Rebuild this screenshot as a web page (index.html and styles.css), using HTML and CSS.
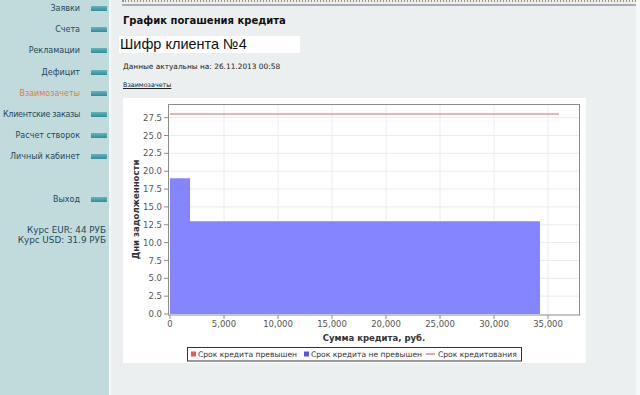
FILE: index.html
```html
<!DOCTYPE html>
<html lang="ru">
<head>
<meta charset="utf-8">
<title>График погашения кредита</title>
<link rel="stylesheet" href="styles.css">
</head>
<body>
<div class="page">
  <nav class="side">
    <ul class="menu">
      <li><span>Заявки</span><i class="bar"></i></li>
      <li><span>Счета</span><i class="bar"></i></li>
      <li><span>Рекламации</span><i class="bar"></i></li>
      <li><span>Дефицит</span><i class="bar"></i></li>
      <li class="active"><span>Взаимозачеты</span><i class="bar"></i></li>
      <li class="tight"><span>Клиентские заказы</span><i class="bar"></i></li>
      <li><span>Расчет створок</span><i class="bar"></i></li>
      <li><span>Личный кабинет</span><i class="bar"></i></li>
      <li class="blank"></li>
      <li><span>Выход</span><i class="bar"></i></li>
    </ul>
    <div class="rates">
      <div>Курс EUR: 44 РУБ</div>
      <div>Курс USD: 31.9 РУБ</div>
    </div>
  </nav>
  <main class="main">
    <div class="topline"></div>
    <h1 class="title">График погашения кредита</h1>
    <div class="client">Шифр клиента №4</div>
    <p class="updated">Данные актуальны на: 26.11.2013 00:58</p>
    <a class="link" href="#">Взаимозачеты</a>
    <div class="chart">
      <svg width="463" height="265" viewBox="0 0 463 265" xmlns="http://www.w3.org/2000/svg">
        <g class="grid">
          <line x1="46" y1="19.65" x2="456" y2="19.65"/>
          <line x1="46" y1="37.5" x2="456" y2="37.5"/>
          <line x1="46" y1="55.35" x2="456" y2="55.35"/>
          <line x1="46" y1="73.2" x2="456" y2="73.2"/>
          <line x1="46" y1="91.05" x2="456" y2="91.05"/>
          <line x1="46" y1="108.9" x2="456" y2="108.9"/>
          <line x1="46" y1="126.75" x2="456" y2="126.75"/>
          <line x1="46" y1="144.6" x2="456" y2="144.6"/>
          <line x1="46" y1="162.45" x2="456" y2="162.45"/>
          <line x1="46" y1="180.3" x2="456" y2="180.3"/>
          <line x1="46" y1="198.15" x2="456" y2="198.15"/>
          <line x1="101" y1="7" x2="101" y2="216"/>
          <line x1="155" y1="7" x2="155" y2="216"/>
          <line x1="209" y1="7" x2="209" y2="216"/>
          <line x1="263" y1="7" x2="263" y2="216"/>
          <line x1="317" y1="7" x2="317" y2="216"/>
          <line x1="371" y1="7" x2="371" y2="216"/>
          <line x1="425" y1="7" x2="425" y2="216"/>
        </g>
        <path class="area" d="M47,216 V80.3 H67 V123.2 H417 V216 Z"/>
        <line class="limit" x1="47" y1="16" x2="436" y2="16"/>
        <rect class="plot" x="45.5" y="6.5" width="411" height="210.5"/>
        <g class="ticks">
          <line x1="41" y1="19.65" x2="45" y2="19.65"/>
          <line x1="41" y1="37.5" x2="45" y2="37.5"/>
          <line x1="41" y1="55.35" x2="45" y2="55.35"/>
          <line x1="41" y1="73.2" x2="45" y2="73.2"/>
          <line x1="41" y1="91.05" x2="45" y2="91.05"/>
          <line x1="41" y1="108.9" x2="45" y2="108.9"/>
          <line x1="41" y1="126.75" x2="45" y2="126.75"/>
          <line x1="41" y1="144.6" x2="45" y2="144.6"/>
          <line x1="41" y1="162.45" x2="45" y2="162.45"/>
          <line x1="41" y1="180.3" x2="45" y2="180.3"/>
          <line x1="41" y1="198.15" x2="45" y2="198.15"/>
          <line x1="41" y1="216" x2="45" y2="216"/>
          <line x1="47" y1="217" x2="47" y2="221"/>
          <line x1="101" y1="217" x2="101" y2="221"/>
          <line x1="155" y1="217" x2="155" y2="221"/>
          <line x1="209" y1="217" x2="209" y2="221"/>
          <line x1="263" y1="217" x2="263" y2="221"/>
          <line x1="317" y1="217" x2="317" y2="221"/>
          <line x1="371" y1="217" x2="371" y2="221"/>
          <line x1="425" y1="217" x2="425" y2="221"/>
        </g>
        <g class="ylab">
          <text x="39" y="22.7">27.5</text>
          <text x="39" y="40.5">25.0</text>
          <text x="39" y="58.4">22.5</text>
          <text x="39" y="76.2">20.0</text>
          <text x="39" y="94.1">17.5</text>
          <text x="39" y="111.9">15.0</text>
          <text x="39" y="129.8">12.5</text>
          <text x="39" y="147.6">10.0</text>
          <text x="39" y="165.5">7.5</text>
          <text x="39" y="183.3">5.0</text>
          <text x="39" y="201.2">2.5</text>
          <text x="39" y="219">0.0</text>
        </g>
        <g class="xlab">
          <text x="47" y="229">0</text>
          <text x="101" y="229">5,000</text>
          <text x="155" y="229">10,000</text>
          <text x="209" y="229">15,000</text>
          <text x="263" y="229">20,000</text>
          <text x="317" y="229">25,000</text>
          <text x="371" y="229">30,000</text>
          <text x="425" y="229">35,000</text>
        </g>
        <text class="axtitle" x="251" y="242.5">Сумма кредита, руб.</text>
        <text class="axtitle" transform="translate(16 111.5) rotate(-90)">Дни задолженности</text>
        <rect class="legend" x="64.5" y="249.5" width="334" height="13.5"/>
        <rect class="sw-red" x="68" y="253.5" width="5" height="5"/>
        <text class="legtext" x="75" y="259">Срок кредита превышен</text>
        <rect class="sw-blue" x="181" y="253.5" width="5" height="5"/>
        <text class="legtext" x="188" y="259">Срок кредита не превышен</text>
        <line class="sw-line" x1="303" y1="256" x2="312" y2="256"/>
        <text class="legtext" x="315" y="259">Срок кредитования</text>
      </svg>
    </div>
  </main>
  <div class="edge"></div>
</div>
</body>
</html>
```

FILE: styles.css
```css
* { box-sizing: border-box; }
html, body { margin: 0; padding: 0; }
body {
  width: 640px;
  height: 395px;
  overflow: hidden;
  background: #ffffff;
  font-family: "DejaVu Sans", Verdana, sans-serif;
}
.page {
  display: flex;
  height: 395px;
}
.side {
  width: 111px;
  flex: none;
  background: #c1dbdc;
  border-right: 2px solid #f3f7f7;
  color: #24485a;
  font-size: 8px;
}
.menu {
  list-style: none;
  margin: -2px 0 0 0;
  padding: 0;
}
.menu li {
  height: 21.2px;
  display: flex;
  align-items: center;
  justify-content: flex-end;
  padding-right: 2px;
  white-space: nowrap;
}
.menu li.tight span { letter-spacing: -0.3px; }
.menu li.blank { height: 21.6px; }
.menu li.active { color: #e47a3a; }
.bar {
  display: block;
  flex: none;
  width: 16px;
  height: 5px;
  margin-left: 11px;
  background: linear-gradient(to bottom, #66b3bc, #2f8e9a);
}
.rates {
  margin-top: 15px;
  padding-right: 3px;
  text-align: right;
  font-size: 8.8px;
  line-height: 10px;
  white-space: nowrap;
}
.main {
  flex: 1;
  background: #ebeff0;
  padding-left: 11px;
}
.topline {
  height: 6px;
  background:
    linear-gradient(#a8acb3, #a8acb3) left 4px / 100% 2px no-repeat,
    repeating-linear-gradient(to right, #a88d6c 0 1.5px, transparent 1.5px 3px) left 0 / 100% 2px no-repeat;
}
.title {
  margin: 8px 0 0 1px;
  font-size: 10px;
  line-height: 14px;
  font-weight: bold;
  color: #111;
}
.client {
  margin: 8px 0 0 -3px;
  width: 181px;
  height: 17px;
  background: #ffffff;
  font-family: "Liberation Sans", Arial, sans-serif;
  font-size: 14.5px;
  line-height: 17px;
  padding-left: 1px;
  color: #111;
}
.updated {
  margin: 8px 0 0 1px;
  font-size: 7.4px;
  line-height: 12px;
  color: #222;
}
.link {
  display: block;
  margin: 6.5px 0 0 1px;
  font-size: 6.4px;
  line-height: 10px;
  color: #222;
  text-decoration: underline;
  width: max-content;
}
.chart {
  margin: 8.5px 0 0 1px;
  width: 463px;
  height: 265px;
  background: #ffffff;
}
.chart svg { display: block; }
.grid line { stroke: #ececec; stroke-width: 1; }
.area { fill: #8585ff; }
.limit { stroke: #cf6b6b; stroke-width: 1; }
.plot { fill: none; stroke: #8c8c8c; stroke-width: 1; }
.ticks line { stroke: #8c8c8c; stroke-width: 1; }
.ylab text {
  font-family: "DejaVu Sans", sans-serif;
  font-size: 8.5px;
  fill: #555;
  text-anchor: end;
}
.xlab text {
  font-family: "DejaVu Sans", sans-serif;
  font-size: 8.5px;
  fill: #555;
  text-anchor: middle;
}
.axtitle {
  font-family: "DejaVu Sans", sans-serif;
  font-size: 8.5px;
  font-weight: bold;
  fill: #333;
  text-anchor: middle;
}
.legend { fill: #ffffff; stroke: #333; stroke-width: 1; }
.sw-red { fill: #ee5555; }
.sw-blue { fill: #5555ee; }
.sw-line { stroke: #dd6677; stroke-width: 1.2; }
.legtext {
  font-family: "DejaVu Sans", sans-serif;
  font-size: 7.6px;
  fill: #333;
}
.edge {
  width: 4px;
  flex: none;
  background: #f7f9f9;
}
```
